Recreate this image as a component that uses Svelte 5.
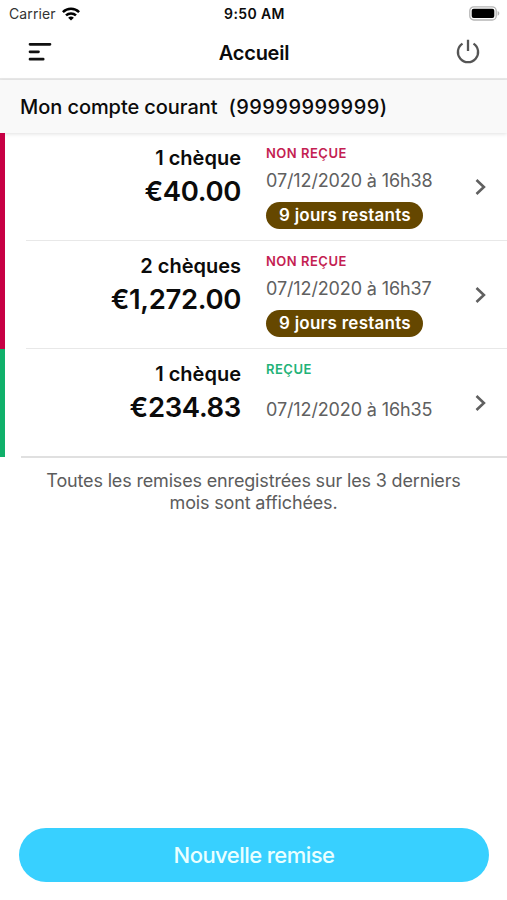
<script lang="ts">
	type Remise = {
		count: number
		amount: string
		received: boolean
		date: string
		remaining?: string
	}

	export let title: string = 'Accueil'
	export let account: string = 'Mon compte courant'
	export let accountNumber: string = '99999999999'
	export let remises: Remise[] = [
		{ count: 1, amount: '€40.00', received: false, date: '07/12/2020 à 16h38', remaining: '9 jours restants' },
		{ count: 2, amount: '€1,272.00', received: false, date: '07/12/2020 à 16h37', remaining: '9 jours restants' },
		{ count: 1, amount: '€234.83', received: true, date: '07/12/2020 à 16h35' }
	]

	const countLabel = (count: number) => `${count} chèque${count > 1 ? 's' : ''}`
</script>

<div class="screen">
	<div class="status-bar">
		<div class="carrier">
			<span>Carrier</span>
			<svg width="18" height="14" viewBox="0 0 18 14">
				<g fill="none" stroke="#000" stroke-width="2.5">
					<path d="M.9 5.1a11.5 11.5 0 0 1 16.2 0" />
					<path d="M4 8.4a7.2 7.2 0 0 1 10 0" />
				</g>
				<path d="M9 13.6 6.1 10.8a4.2 4.2 0 0 1 5.8 0z" />
			</svg>
		</div>
		<span class="clock">9:50 AM</span>
		<svg class="battery" width="31" height="15" viewBox="0 0 31 15">
			<rect x=".8" y=".8" width="26.4" height="13.2" rx="4" fill="#fff" stroke="#b5b5b5" stroke-width="1.3" />
			<rect x="2.7" y="2.7" width="22.6" height="9.4" rx="2" />
			<path d="M28.6 5.1c2.3.8 2.3 3.8 0 4.6z" fill="#b5b5b5" />
		</svg>
	</div>

	<header>
		<button class="icon-button" aria-label="Menu">
			<svg width="24" height="20" viewBox="0 0 24 20">
				<path d="M2 2.3h20M2 9.8h8.5M2 17.2h13.2" fill="none" stroke="#111" stroke-width="2.7" stroke-linecap="round" />
			</svg>
		</button>
		<h1>{title}</h1>
		<button class="icon-button" aria-label="Déconnexion">
			<svg width="24" height="26" viewBox="0 0 24 26">
				<path d="M6.5 4.6a10.1 10.1 0 1 0 11 0M12 .7v11.3" fill="none" stroke="#555" stroke-width="2.3" />
			</svg>
		</button>
	</header>

	<div class="account">
		<span class="account-name">{account}</span>
		<span class="account-number">({accountNumber})</span>
	</div>

	<ul>
		{#each remises as remise}
			<li class:received={remise.received}>
				<div class="row">
					<div class="sum">
						<span class="count">{countLabel(remise.count)}</span>
						<span class="amount">{remise.amount}</span>
					</div>
					<div class="details">
						<span class="state">{remise.received ? 'REÇUE' : 'NON REÇUE'}</span>
						<span class="date">{remise.date}</span>
						{#if remise.remaining}
							<span class="remaining">{remise.remaining}</span>
						{/if}
					</div>
					<svg class="chevron" width="12" height="18" viewBox="0 0 12 18">
						<path d="M1.5 2l7.4 7-7.4 7" fill="none" stroke="#606060" stroke-width="2.6" />
					</svg>
				</div>
			</li>
		{/each}
	</ul>

	<p class="note">Toutes les remises enregistrées sur les 3 derniers mois sont affichées.</p>

	<footer>
		<button class="new-button">Nouvelle remise</button>
	</footer>
</div>

<style>
	.screen {
		display: flex;
		flex-direction: column;
		height: 900px;
		background: #fff;
		color: #0b0b0b;
		font-family: Inter, "Liberation Sans", sans-serif;
	}

	button {
		padding: 0;
		border: none;
		background: none;
		font-family: inherit;
	}

	svg {
		display: block;
	}

	.status-bar {
		display: grid;
		grid-template-columns: 1fr auto 1fr;
		align-items: center;
		height: 27px;
		padding: 0 7px 0 9px;
		box-sizing: border-box;
		font-size: 14px;
	}

	.carrier {
		display: flex;
		align-items: center;
		gap: 6px;
		color: #333;
	}

	.carrier span {
		letter-spacing: 0.1px;
	}

	.clock {
		font-weight: 600;
		letter-spacing: 0.4px;
	}

	.battery {
		justify-self: end;
	}

	header {
		display: flex;
		justify-content: space-between;
		align-items: center;
		height: 51px;
		padding: 0 27px 0 28px;
		border-bottom: 2px solid #e9e9e9;
	}

	.icon-button {
		margin-bottom: 2px;
	}

	h1 {
		margin: 0;
		font-size: 20px;
		font-weight: 600;
		letter-spacing: -0.25px;
	}

	.account {
		display: flex;
		gap: 11px;
		align-items: center;
		height: 53px;
		padding: 0 20px;
		background: #f9f9f9;
		box-shadow: 0 1px 4px rgba(0, 0, 0, 0.12);
		font-size: 20px;
		font-weight: 500;
	}

	.account-name {
		letter-spacing: -0.07px;
	}

	.account-number {
		letter-spacing: 0.45px;
	}

	ul {
		position: relative;
		margin: 0;
		padding: 0;
		list-style: none;
	}

	li {
		height: 108px;
		padding-left: 21px;
		border-left: 5px solid #c70044;
		box-sizing: border-box;
	}

	li.received {
		border-color: #10b06a;
	}

	.row {
		display: grid;
		grid-template-columns: 215px 1fr 12px;
		column-gap: 25px;
		height: 108px;
		padding-right: 20px;
		border-bottom: 1px solid #e8e8e8;
		box-sizing: border-box;
	}

	li:last-child {
		padding-left: 16px;
	}

	li:last-child .row {
		grid-template-columns: 220px 1fr 12px;
		height: 109px;
		border-bottom: 2px solid #e0e0e0;
	}

	.sum {
		display: flex;
		flex-direction: column;
		align-items: flex-end;
		padding-top: 12px;
	}

	.count {
		font-size: 20px;
		font-weight: 600;
		line-height: 26px;
	}

	.amount {
		font-size: 27.5px;
		font-weight: 600;
		line-height: 40px;
		letter-spacing: -0.35px;
	}

	.details {
		display: flex;
		flex-direction: column;
		align-items: flex-start;
		padding-top: 12px;
	}

	.state {
		color: #c41e52;
		font-size: 13px;
		font-weight: 600;
		line-height: 16px;
		letter-spacing: 0.5px;
	}

	.date {
		margin-top: 8px;
		color: #606060;
		font-size: 18px;
		line-height: 24px;
		letter-spacing: -0.12px;
	}

	.remaining {
		margin-top: 9px;
		padding: 0 12px 0 13px;
		border-radius: 14px;
		background: #654700;
		color: #fff;
		font-size: 17px;
		font-weight: 600;
		line-height: 27px;
		letter-spacing: 0.25px;
	}

	.received .state {
		color: #22b277;
	}

	.received .date {
		margin-top: 21px;
	}

	.chevron {
		align-self: center;
	}

	.note {
		margin: 13px 40px 0;
		color: #5c5c5c;
		font-size: 18px;
		line-height: 22px;
		letter-spacing: -0.16px;
		text-align: center;
	}

	footer {
		margin-top: auto;
		padding: 0 18px 18px 19px;
	}

	.new-button {
		width: 100%;
		height: 54px;
		border-radius: 27px;
		background: #38d0ff;
		color: #eaffff;
		font-size: 22px;
		font-weight: 500;
		letter-spacing: -0.55px;
	}
</style>
